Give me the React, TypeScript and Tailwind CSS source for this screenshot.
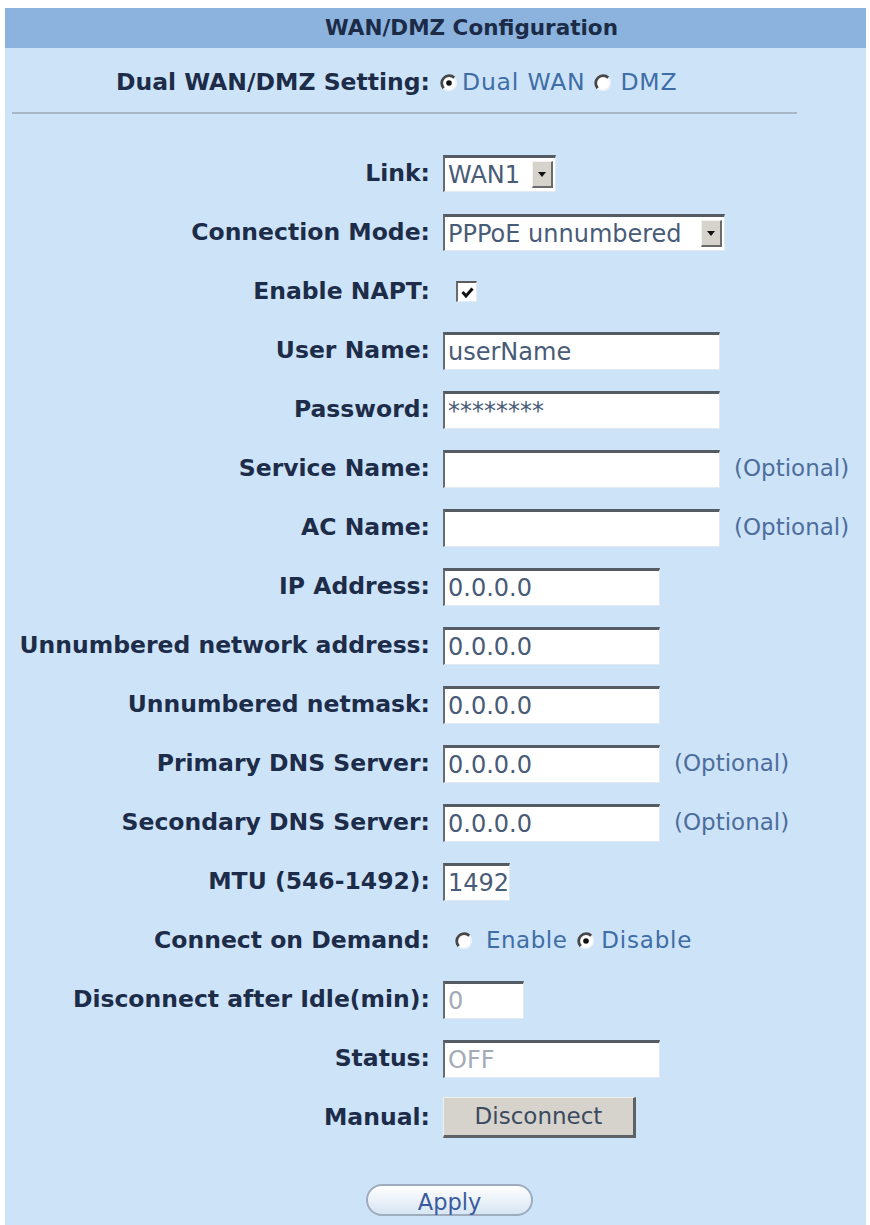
import type { ReactNode } from 'react'

const FONT = { fontFamily: '"DejaVu Sans", Verdana, sans-serif' }

function Radio({ checked }: { checked?: boolean }) {
  return (
    <svg width="18" height="18" viewBox="0 0 18 18" className="shrink-0">
      <circle cx="9" cy="9" r="7.5" fill="#ffffff" />
      {/* sunken edge: dark on the upper left, light on the lower right */}
      <path d="M3.7 14.3 A7.5 7.5 0 0 1 14.3 3.7" fill="none" stroke="#474747" strokeWidth="2.8" />
      <path d="M14.3 3.7 A7.5 7.5 0 0 1 3.7 14.3" fill="none" stroke="#eef3f8" strokeWidth="1.5" />
      {checked && <circle cx="9" cy="9" r="2.8" fill="#111111" />}
    </svg>
  )
}

function Check() {
  return (
    <div className="w-[21px] h-[21px] bg-white border-t-2 border-l-2 border-r border-b border-t-[#5c5c5c] border-l-[#6a6a6a] border-r-[#e4ebf2] border-b-[#e4ebf2] flex items-center justify-center">
      <svg width="15" height="15" viewBox="0 0 15 15">
        <path d="M2.5 7 L6 11 L12.5 3.5" fill="none" stroke="#111111" strokeWidth="3" />
      </svg>
    </div>
  )
}

function TextBox({ width, value = '', dim }: { width: string; value?: string; dim?: boolean }) {
  return (
    <div
      className={`${width} h-[38px] bg-white border-t-[3px] border-l-2 border-r border-b border-t-[#555b62] border-l-[#666c73] border-r-[#e2e9f1] border-b-[#e2e9f1] flex items-center pl-[3px] text-[24px] whitespace-nowrap overflow-hidden ${
        dim ? 'text-[#a3acb6]' : 'text-[#485b77]'
      }`}
    >
      {value}
    </div>
  )
}

function Select({ width, value }: { width: string; value: string }) {
  return (
    <div className={`${width} h-[37px] bg-white border-t-[3px] border-l-2 border-r border-b border-t-[#555b62] border-l-[#666c73] border-r-[#e2e9f1] border-b-[#e2e9f1] flex items-center justify-between pl-[3px] pr-[2px] text-[24px] text-[#485b77] whitespace-nowrap`}>
      <span>{value}</span>
      <div className="w-[21px] h-[27px] bg-[#d6d3cc] border-t border-l border-r-2 border-b-2 border-t-[#f4f2ee] border-l-[#f4f2ee] border-r-[#6b6b6b] border-b-[#6b6b6b] flex items-center justify-center">
        <svg width="8" height="5" viewBox="0 0 8 5">
          <path d="M0 0 H8 L4 5 Z" fill="#111111" />
        </svg>
      </div>
    </div>
  )
}

function Optional() {
  return <span className="ml-[14px] text-[23px] text-[#4d6d9c]">(Optional)</span>
}

function Row({ label, children, h = 'h-[59px]' }: { label: string; children?: ReactNode; h?: string }) {
  return (
    <div className={`grid grid-cols-[425px_1fr] gap-x-[13px] items-center ${h}`}>
      <div className="text-right font-bold text-[23.5px] text-[#1d2c49] whitespace-nowrap">{label}</div>
      <div className="flex items-center">{children}</div>
    </div>
  )
}

export default function App() {
  return (
    <div className="min-h-[1225px] bg-white pt-[8px] pl-[5px]" style={FONT}>
      <div className="w-[861px] min-h-[1217px] bg-[#cde4f8]">
        <div className="h-[40px] bg-[#8cb3dd] flex items-center justify-center pl-[72px] font-bold text-[21.5px] text-[#1b2b48]">
          WAN/DMZ Configuration
        </div>

        <div className="mt-[17px]">
          <Row label="Dual WAN/DMZ Setting:" h="h-[30px]">
            <div className="flex items-center -ml-[3px]">
              <Radio checked />
              <span className="ml-[4px] text-[23.5px] tracking-[0.8px] text-[#3f6da6]">Dual WAN</span>
              <span className="ml-[9px]"><Radio /></span>
              <span className="ml-[8px] text-[23.5px] tracking-[0.8px] text-[#3f6da6]">DMZ</span>
            </div>
          </Row>
        </div>

        <div className="mt-[17px] ml-[7px] w-[785px] border-t-2 border-t-[#a9b7c6]" />

        <div className="mt-[30px]">
          <Row label="Link:">
            <Select width="w-[113px]" value="WAN1" />
          </Row>
          <Row label="Connection Mode:">
            <Select width="w-[282px]" value="PPPoE unnumbered" />
          </Row>
          <Row label="Enable NAPT:">
            <div className="ml-[13px]"><Check /></div>
          </Row>
          <Row label="User Name:">
            <TextBox width="w-[277px]" value="userName" />
          </Row>
          <Row label="Password:">
            <TextBox width="w-[277px]" value="********" />
          </Row>
          <Row label="Service Name:">
            <TextBox width="w-[277px]" />
            <Optional />
          </Row>
          <Row label="AC Name:">
            <TextBox width="w-[277px]" />
            <Optional />
          </Row>
          <Row label="IP Address:">
            <TextBox width="w-[217px]" value="0.0.0.0" />
          </Row>
          <Row label="Unnumbered network address:">
            <TextBox width="w-[217px]" value="0.0.0.0" />
          </Row>
          <Row label="Unnumbered netmask:">
            <TextBox width="w-[217px]" value="0.0.0.0" />
          </Row>
          <Row label="Primary DNS Server:">
            <TextBox width="w-[217px]" value="0.0.0.0" />
            <Optional />
          </Row>
          <Row label="Secondary DNS Server:">
            <TextBox width="w-[217px]" value="0.0.0.0" />
            <Optional />
          </Row>
          <Row label="MTU (546-1492):">
            <TextBox width="w-[67px]" value="1492" />
          </Row>
          <Row label="Connect on Demand:">
            <div className="flex items-center ml-[12px]">
              <Radio />
              <span className="ml-[13px] text-[23px] tracking-[0.5px] text-[#3f6da6]">Enable</span>
              <span className="ml-[10px]"><Radio checked /></span>
              <span className="ml-[6px] text-[23px] tracking-[0.8px] text-[#3f6da6]">Disable</span>
            </div>
          </Row>
          <Row label="Disconnect after Idle(min):">
            <TextBox width="w-[81px]" value="0" dim />
          </Row>
          <Row label="Status:">
            <TextBox width="w-[217px]" value="OFF" dim />
          </Row>
          <Row label="Manual:">
            <button className="w-[193px] h-[41px] bg-[#d6d3cc] border-t border-l border-r-[3px] border-b-[3px] border-t-[#f2f0ec] border-l-[#f2f0ec] border-r-[#5e6166] border-b-[#5e6166] text-[23px] text-[#3b4a5f]">
              Disconnect
            </button>
          </Row>
        </div>

        <div className="mt-[37px] flex justify-center pl-[28px]">
          <button className="w-[167px] h-[32px] rounded-full border-2 border-[#9eacbd] bg-gradient-to-b from-white to-[#d7e5f3] text-[22.5px] text-[#3b5c9c]">
            Apply
          </button>
        </div>
      </div>
    </div>
  )
}
